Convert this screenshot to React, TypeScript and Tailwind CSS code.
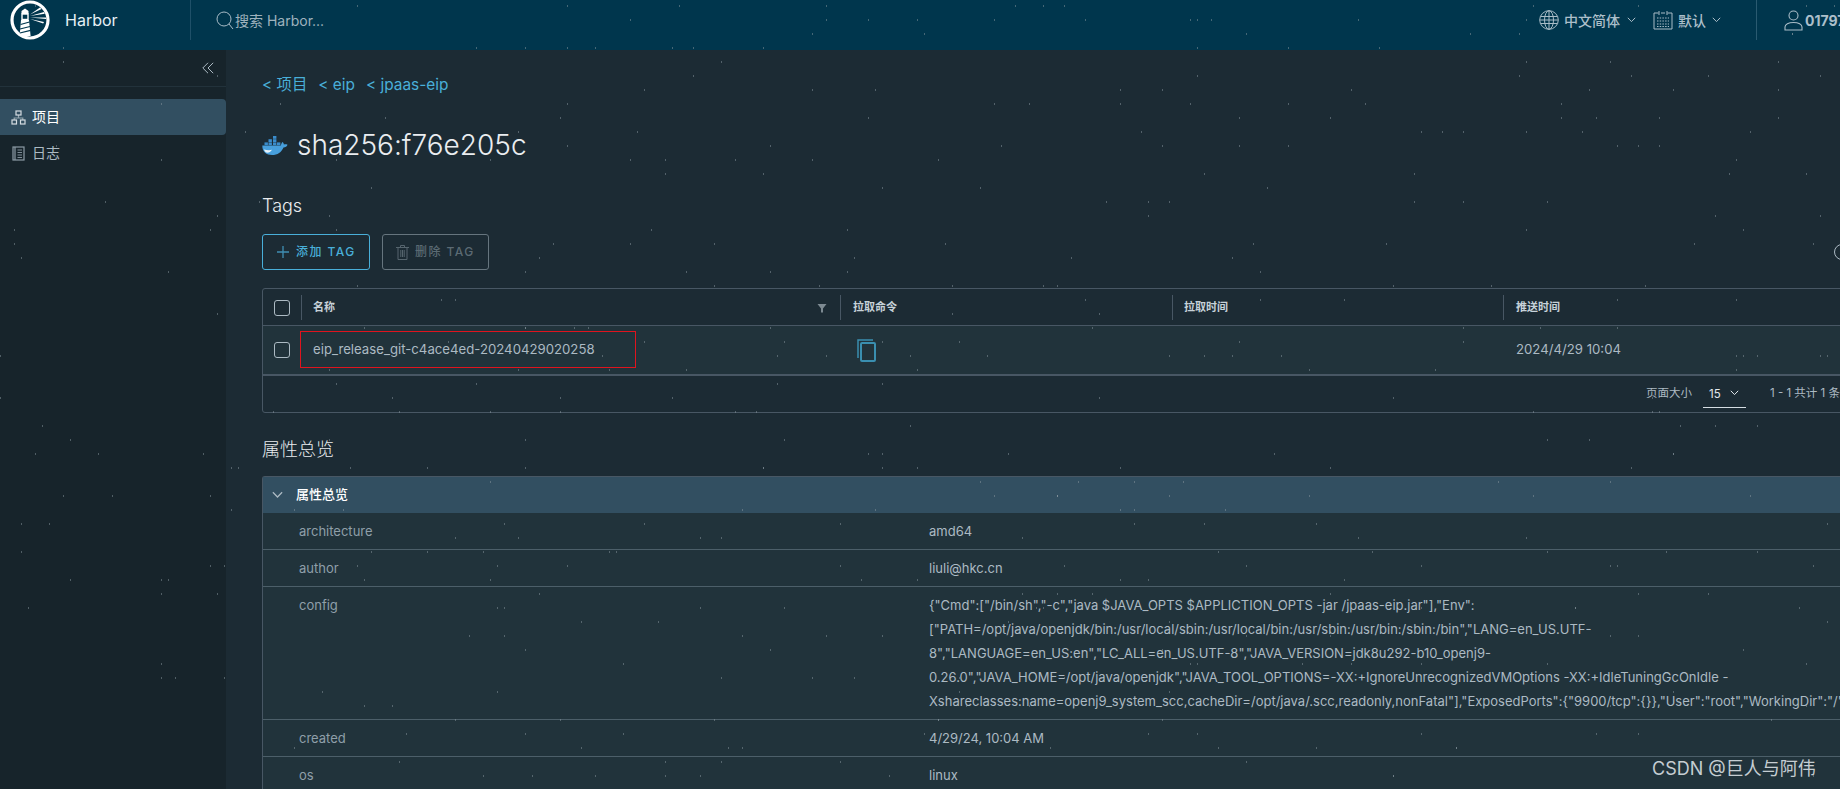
import { useMemo } from "react";

const font = { fontFamily: '"Inter", "Noto Sans CJK SC", sans-serif' };

function Dots() {
  const dots = useMemo(() => {
    const out: { x: number; y: number }[] = [];
    let s = 12345;
    const r = () => {
      s = (s * 1664525 + 1013904223) >>> 0;
      return s / 4294967296;
    };
    for (let i = 0; i < 460; i++) {
      const x = Math.floor(r() * 263) * 7;
      const y = Math.floor(r() * 56) * 14 + 5;
      out.push({ x, y });
    }
    return out;
  }, []);
  return (
    <svg className="absolute inset-0 pointer-events-none" width="1840" height="789" aria-hidden="true">
      {dots.map((d, i) => (
        <rect key={i} x={d.x} y={d.y} width="1" height="2" fill="#8a979f" opacity="0.5" />
      ))}
    </svg>
  );
}

function Logo() {
  return (
    <svg width="40" height="40" viewBox="0 0 40 40" className="shrink-0">
      <circle cx="20" cy="20" r="18" fill="none" stroke="#fff" strokeWidth="3.2" />
      <path d="M15 8.5l3.5 2.5v3h-7v-3z" fill="#fff" />
      <rect x="12" y="14" width="6" height="5.5" fill="none" stroke="#fff" strokeWidth="1.4" />
      <path d="M11 20h8l1.6 16h-11z" fill="#fff" />
      <path d="M10.5 24.5l9-2.5M10 29l10-2.5M9.8 33l10.8-2.6" stroke="#00364d" strokeWidth="1.2" />
      <path d="M20 14.5l10-7 1.500 1.600zM20 16l14-4 .8 1.800zM20 17.500h16v1.600zM20 19l14 3-.8 1.600z" fill="#fff" />
    </svg>
  );
}

function Whale() {
  return (
    <svg width="26" height="19" viewBox="0 0 26 19" className="shrink-0">
      <path
        d="M.3 9.500h18.500c.4-1.500 1-3 1.700-3.500 .8 .6 1.300 1.500 1.400 2.600 1-.4 2.400-.5 3.600 .2-.6 1.700-2 2.600-4 2.600-1.800 4.500-6 7.600-11.500 7.600C4.500 19 .2 16 .3 9.500z"
        fill="#479fdc"
      />
      <path d="M2 13.500c2.500 .5 5 1 8 .3-1.200 2-3 3-4.500 3-1.800 0-3-1.500-3.500-3.300z" fill="#e8f3fa" />
      <g fill="#3a8ccb">
        <rect x="11" y="0" width="3.400" height="2.800" />
        <rect x="6.500" y="3.200" width="3.400" height="2.800" />
        <rect x="11" y="3.200" width="3.400" height="2.800" />
        <rect x="2.500" y="6.400" width="3.400" height="2.800" />
        <rect x="6.500" y="6.400" width="3.400" height="2.800" />
        <rect x="11" y="6.400" width="3.400" height="2.800" />
        <rect x="15" y="6.400" width="3.400" height="2.800" />
      </g>
    </svg>
  );
}

function Chevron({ className = "" }: { className?: string }) {
  return (
    <svg width="9" height="6" viewBox="0 0 9 6" className={className} fill="none" stroke="currentColor" strokeWidth="1">
      <path d="M.8 .8l3.700 3.800 3.700-3.800" />
    </svg>
  );
}

function Checkbox() {
  return <div className="w-4 h-4 rounded-[3px] border border-[#acbac3]" />;
}

function Header() {
  return (
    <header className="h-[50px] shrink-0 bg-[#00364d] flex items-start">
      <div className="h-10 w-[191px] shrink-0 flex items-center pl-[10px] border-r border-[#1f5068]">
        <Logo />
        <span className="ml-[15px] text-[16px] text-[#e6f0f5]">Harbor</span>
      </div>
      <div className="h-10 flex items-center pl-[25px] text-[14px] text-[#9fb2bd]">
        <svg width="18" height="19" viewBox="0 0 18 19" fill="none" stroke="#a9bcc7" strokeWidth="1">
          <circle cx="8" cy="8" r="7" />
          <path d="M13 13l4 5" />
        </svg>
        <span className="ml-[1px]">搜索 Harbor...</span>
      </div>
      <div className="ml-auto h-10 flex items-center text-[14px] font-medium text-[#acbfca]">
        <svg width="20" height="20" viewBox="0 0 20 20" fill="none" stroke="#a9bcc7" strokeWidth="1">
          <circle cx="10" cy="10" r="9.300" />
          <ellipse cx="10" cy="10" rx="4.500" ry="9.300" />
          <path d="M10 .7v18.600M1.500 6.500h17M1 10h18M1.500 13.500h17" />
        </svg>
        <span className="ml-[5px]">中文简体</span>
        <Chevron className="ml-[7px]" />
        <svg width="20" height="20" viewBox="0 0 20 20" fill="none" stroke="#a9bcc7" strokeWidth="1" className="ml-[17px]">
          <path d="M5.500 3H1v16h18V3h-4.500M8 3h4M6 1v4M14 1v4" />
          <path d="M4 8h12M4 11h12M4 14h12M4 16.500h12" strokeDasharray="1.500 1.200" />
        </svg>
        <span className="ml-[5px]">默认</span>
        <Chevron className="ml-[6px]" />
        <div className="ml-[35px] mr-[27px] h-10 w-px bg-[#2a5a70]" />
        <svg width="19" height="21" viewBox="0 0 19 21" fill="none" stroke="#a9bcc7" strokeWidth="1.100">
          <circle cx="9.500" cy="5.500" r="4.500" />
          <path d="M1 20v-3c0-2.500 3.500-4.500 8.500-4.500S18 14.500 18 17v3z" />
        </svg>
        <span className="ml-[2px] w-[35px] overflow-hidden font-bold text-[14px]">01797</span>
      </div>
    </header>
  );
}

function Sidebar() {
  return (
    <aside className="w-[226px] shrink-0 bg-[#17242b]">
      <div className="h-[37px] border-b border-[#22323b] flex items-center justify-end pr-[12px] text-[#acbac3]">
        <svg width="12" height="12" viewBox="0 0 12 12" fill="none" stroke="currentColor" strokeWidth="1">
          <path d="M6 .8L.8 6 6 11.200M11.200 .8L6 6l5.200 5.200" />
        </svg>
      </div>
      <nav className="mt-[12px] text-[14px]">
        <div className="h-9 rounded-r-[4px] bg-[#324f61] flex items-center pl-[11px] text-white">
          <svg width="15" height="15" viewBox="0 0 15 15" fill="none" stroke="#d5dde2" strokeWidth="1.200">
            <rect x="5" y="1" width="5" height="4" />
            <rect x="1" y="10" width="4.500" height="4" />
            <rect x="9.500" y="10" width="4.500" height="4" />
            <path d="M7.500 5v3M3.200 10V8h8.600v2" strokeOpacity="0.6" />
          </svg>
          <span className="ml-[6px] -mt-[2px]">项目</span>
        </div>
        <div className="h-9 flex items-center pl-[12px] text-[#acbac3]">
          <svg width="13" height="15" viewBox="0 0 13 15" fill="none" stroke="#8c9ba5" strokeWidth="1.200">
            <rect x="1" y="1" width="11" height="13" />
            <path d="M3 1v13" />
            <path d="M5.500 4h4.500M5.500 6.500h4.500M5.500 9h4.500M5.500 11.500h4.500" strokeWidth="0.900" />
          </svg>
          <span className="ml-[7px] -mt-[2px]">日志</span>
        </div>
      </nav>
    </aside>
  );
}

function TagsTable() {
  return (
    <div className="mt-[18px] relative w-[1640px] rounded-t-[3px] rounded-b-[3px] border border-[#485764] text-[#acbac3]">
      <div className="h-[36px] flex items-center text-[11px] font-semibold text-[#c7d2d9]">
        <div className="w-[38px] flex justify-center pt-px"><Checkbox /></div>
        <div className="w-[539px] h-[25px] border-l border-[#485764] pl-[11px] pr-[13px] flex items-center justify-between">
          <span>名称</span>
          <svg width="10" height="10" viewBox="0 0 10 10" className="mt-[2px]"><path d="M.5 1h9L6 5.500V9.500H4V5.500z" fill="#7d8a92" /></svg>
        </div>
        <div className="w-[332px] h-[25px] border-l border-[#485764] pl-[12px] flex items-center">拉取命令</div>
        <div className="w-[331px] h-[25px] border-l border-[#485764] pl-[11px] flex items-center">拉取时间</div>
        <div className="h-[25px] border-l border-[#485764] pl-[12px] flex items-center">推送时间</div>
      </div>
      <div className="h-[51px] flex items-center bg-[#21333b] border-t border-b-2 border-[#485764] text-[13.2px]">
        <div className="w-[38px] flex justify-center"><Checkbox /></div>
        <div className="w-[539px] pl-[12px]">eip_release_git-c4ace4ed-20240429020258</div>
        <div className="w-[332px] pl-[16px]">
          <svg width="20" height="23" viewBox="0 0 20 23" fill="none" stroke="#3a8fb0" strokeWidth="2">
            <path d="M17 1H2v18" strokeWidth="1.500" />
            <rect x="5" y="4" width="14" height="18" rx="1" />
          </svg>
        </div>
        <div className="w-[331px]" />
        <div className="pl-[13px]">2024/4/29 10:04</div>
      </div>
      <div className="h-[36px] flex items-center text-[11.5px] pl-[1383px]">
        <span>页面大小</span>
        <div className="ml-[11px] w-[43px] h-[26px] border-b border-[#d5dde2] flex items-center pl-[6px] pr-[7px] justify-between text-[#e3e9ed] mt-[2px]">
          <span>15</span>
          <Chevron className="-mt-[3px]" />
        </div>
        <span className="ml-[24px]">1 - 1 共计 1 条记录</span>
      </div>
      <div className="absolute left-[37px] top-[42px] w-[336px] h-[37px] border border-[#e0141e]" />
    </div>
  );
}

function Overview() {
  const rows: [string, string[]][] = [
    ["architecture", ["amd64"]],
    ["author", ["liuli@hkc.cn"]],
    [
      "config",
      [
        '{"Cmd":["/bin/sh","-c","java $JAVA_OPTS $APPLICTION_OPTS -jar /jpaas-eip.jar"],"Env":',
        '["PATH=/opt/java/openjdk/bin:/usr/local/sbin:/usr/local/bin:/usr/sbin:/usr/bin:/sbin:/bin","LANG=en_US.UTF-',
        '8","LANGUAGE=en_US:en","LC_ALL=en_US.UTF-8","JAVA_VERSION=jdk8u292-b10_openj9-',
        '0.26.0","JAVA_HOME=/opt/java/openjdk","JAVA_TOOL_OPTIONS=-XX:+IgnoreUnrecognizedVMOptions -XX:+IdleTuningGcOnIdle -',
        'Xshareclasses:name=openj9_system_scc,cacheDir=/opt/java/.scc,readonly,nonFatal"],"ExposedPorts":{"9900/tcp":{}},"User":"root","WorkingDir":"/"}',
      ],
    ],
    ["created", ["4/29/24, 10:04 AM"]],
    ["os", ["linux"]],
  ];
  return (
    <div className="mt-[14px] w-[1640px] rounded-t-[3px] border-t border-l border-[#485764]">
      <div className="h-[36px] bg-[#324f61] flex items-center pl-[10px] text-[13px] font-medium text-white">
        <Chevron className="text-[#acbac3] scale-125" />
        <span className="ml-[14px]">属性总览</span>
      </div>
      <div className="bg-[#21333b] text-[13px] leading-6 text-[#acbac3]">
        {rows.map(([k, v]) => (
          <div key={k} className="flex py-[6px] border-b border-[#4c5f69]">
            <div className="w-[666px] shrink-0 pl-[36px] text-[#8f9fa9]">{k}</div>
            <div className="whitespace-nowrap">
              {v.map((l) => (
                <div key={l}>{l}</div>
              ))}
            </div>
          </div>
        ))}
      </div>
    </div>
  );
}

export default function App() {
  return (
    <div className="relative w-[1840px] h-[789px] overflow-hidden flex flex-col bg-[#1c2b34]" style={font}>
      <Header />
      <div className="flex flex-1 min-h-0">
        <Sidebar />
        <main className="flex-1 min-w-0 overflow-hidden pl-[36px] pt-[25px]">
          <div className="h-5 flex items-center text-[15.4px] text-[#49afd9]">
            <span>&lt; 项目</span>
            <span className="ml-[11px]">&lt; eip</span>
            <span className="ml-[11px]">&lt; jpaas-eip</span>
          </div>
          <div className="mt-[32px] h-9 flex items-center">
            <Whale />
            <h1 className="ml-[9px] text-[28px] font-light text-[#eaedf0]">sha256:f76e205c</h1>
          </div>
          <h2 className="mt-[31px] h-6 leading-6 text-[18px] font-light text-[#eaedf0]">Tags</h2>
          <div className="mt-[16px] w-[1588px] flex items-center">
            <button className="h-9 w-[108px] rounded-[3px] border border-[#49afd9] flex items-center pl-[14px] text-[12px] font-medium tracking-[0.12em] text-[#49afd9]">
              <svg width="12" height="12" viewBox="0 0 12 12" stroke="#3f8fb3" strokeWidth="1.300"><path d="M6 0v12M0 6h12" /></svg>
              <span className="ml-[7px]">添加 TAG</span>
            </button>
            <button className="ml-3 h-9 w-[107px] rounded-[3px] border border-[#66757e] flex items-center pl-[13px] text-[12px] font-medium tracking-[0.12em] text-[#5b6a73]">
              <svg width="13" height="15" viewBox="0 0 13 15" fill="none" stroke="#56656e" strokeWidth="1"><path d="M0 2.500h13M2 2.500V14.500h9V2.500M4.500 2.500V.5h4v2M4.800 5v7M6.500 5v7M8.200 5v7" /></svg>
              <span className="ml-[6px]">删除 TAG</span>
            </button>
            <svg width="16" height="16" viewBox="0 0 16 16" fill="none" stroke="#acbac3" className="ml-auto"><circle cx="8" cy="8" r="7.500" /></svg>
          </div>
          <TagsTable />
          <h2 className="mt-[25px] h-6 leading-6 text-[18px] font-light text-[#eaedf0]">属性总览</h2>
          <Overview />
        </main>
      </div>
      <Dots />
      <div className="absolute left-[1652px] top-[755px] text-[18px] text-[#c5cdd2]">CSDN @巨人与阿伟</div>
    </div>
  );
}
